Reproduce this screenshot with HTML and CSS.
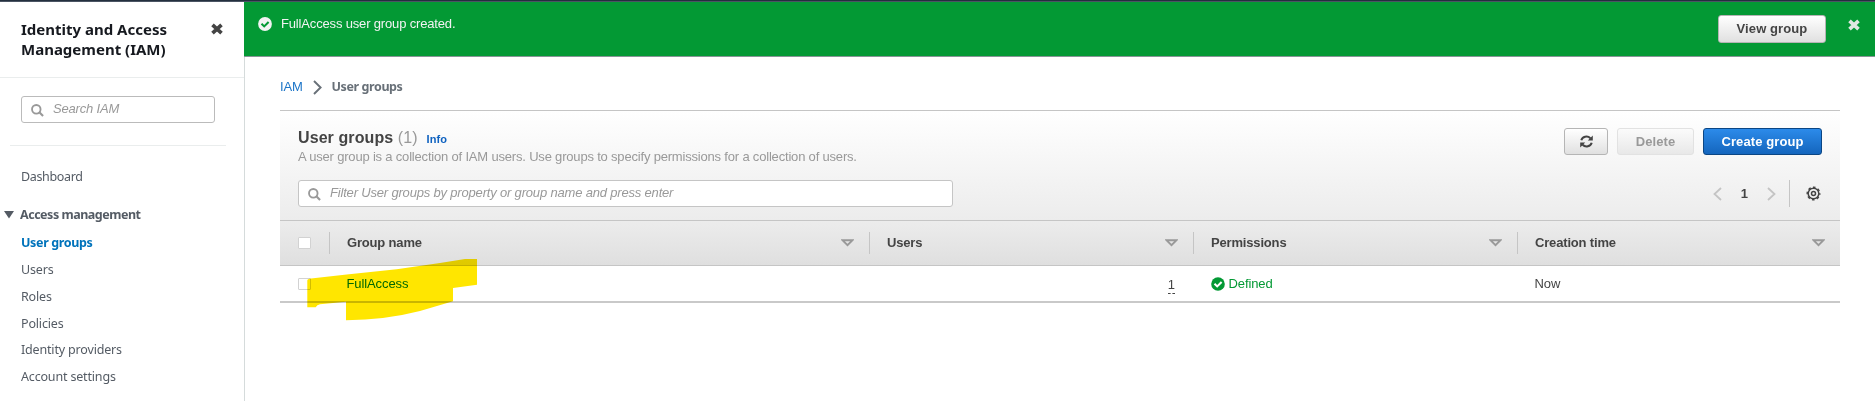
FILE: index.html
```html
<!DOCTYPE html>
<html lang="en">
<head>
<meta charset="utf-8">
<title>IAM - User groups</title>
<link rel="stylesheet" href="styles.css">
</head>
<body>
<svg class="defs" width="0" height="0">
  <symbol id="close" viewBox="0 0 12 12"><path d="M1.500 1.800 10.500 10.200M10.500 1.800 1.500 10.200" fill="none" stroke="currentColor" stroke-width="3.700"/></symbol>
  <symbol id="search" viewBox="0 0 14 14"><circle cx="5.7" cy="5.7" r="4.600" fill="none" stroke="currentColor" stroke-width="2"/><path d="M9 9l4 4" stroke="currentColor" stroke-width="2.300"/></symbol>
  <symbol id="sort" viewBox="0 0 13 8"><path d="M1.700 1.300h9.600L6.500 6.200z" fill="none" stroke="currentColor" stroke-width="1.900"/></symbol>
</svg>
<div class="topbar"></div>
<div class="layout">
  <nav class="sidebar">
    <header class="side-head">
      <h1 class="side-title">Identity and Access<br>Management (IAM)</h1>
      <svg class="side-close" width="12" height="12"><use href="#close"/></svg>
    </header>
    <div class="side-search"><svg width="13" height="13"><use href="#search"/></svg><span class="ph">Search IAM</span></div>
    <hr class="side-rule">
    <a class="nav-item dash">Dashboard</a>
    <div class="nav-group"><svg width="10" height="8"><path d="M0 0h10L5 7.500z" fill="#545b64"/></svg><span>Access management</span></div>
    <ul class="nav-list">
      <li class="nav-item active">User groups</li>
      <li class="nav-item">Users</li>
      <li class="nav-item">Roles</li>
      <li class="nav-item">Policies</li>
      <li class="nav-item">Identity providers</li>
      <li class="nav-item">Account settings</li>
    </ul>
  </nav>
  <main class="main">
    <div class="flash">
      <svg class="flash-icon" width="14" height="14" viewBox="0 0 14 14"><circle cx="7" cy="7" r="6.900" fill="#f2f3f3"/><path d="M3.500 6.800 6.200 9.400 10.600 5" fill="none" stroke="#039934" stroke-width="2.100"/></svg>
      <span class="flash-text">FullAccess user group created.</span>
      <button class="btn view">View group</button>
      <svg class="flash-close" width="12" height="12"><use href="#close"/></svg>
    </div>
    <div class="crumbs">
      <a class="crumb-link">IAM</a>
      <svg width="9" height="15" viewBox="0 0 9 15"><path d="M1 1l6.600 6.500L1 14" fill="none" stroke="#687078" stroke-width="1.900"/></svg>
      <span class="crumb-here">User groups</span>
    </div>
    <section class="panel">
      <div class="panel-head">
        <div class="head-row">
          <div class="titles">
            <h2 class="title">User groups <span class="count">(1)</span><a class="info">Info</a></h2>
            <p class="desc">A user group is a collection of IAM users. Use groups to specify permissions for a collection of users.</p>
          </div>
          <div class="actions">
            <button class="btn refresh"><svg width="13" height="13" viewBox="0 0 13 13"><g fill="none" stroke="#444" stroke-width="2"><path d="M1.300 5.300C2.300 1.600 7.400.200 10.400 3.300"/><path d="M11.700 7.700c-1 3.700-6.100 5.100-9.100 2"/></g><path d="M12.800.600v5H7.800zM.2 12.400v-5h5z" fill="#444"/></svg></button>
            <button class="btn delete">Delete</button>
            <button class="btn create">Create group</button>
          </div>
        </div>
        <div class="filter-row">
          <div class="filter"><svg width="13" height="13"><use href="#search"/></svg><span class="ph">Filter User groups by property or group name and press enter</span></div>
          <div class="pager">
            <svg width="9" height="14" viewBox="0 0 9 14"><path d="M8 1 1.500 7 8 13" fill="none" stroke="#c4c4c4" stroke-width="1.800"/></svg>
            <b class="page">1</b>
            <svg width="9" height="14" viewBox="0 0 9 14"><path d="M1 1l6.500 6L1 13" fill="none" stroke="#c4c4c4" stroke-width="1.800"/></svg>
            <span class="gear"><svg width="15" height="15" viewBox="0 0 15 15"><circle cx="7.500" cy="7.500" r="5.300" fill="none" stroke="#444" stroke-width="1.500"/><circle cx="7.500" cy="7.500" r="6.300" fill="none" stroke="#444" stroke-width="1.400" stroke-dasharray="2.600 2.348" stroke-dashoffset="1.300"/><circle cx="7.500" cy="7.500" r="2" fill="none" stroke="#444" stroke-width="1.500"/></svg></span>
          </div>
        </div>
      </div>
      <div class="grid thead">
        <div class="cell"><i class="check"></i></div>
        <div class="cell th"><span>Group name</span><svg width="13" height="8"><use href="#sort"/></svg></div>
        <div class="cell th"><span>Users</span><svg width="13" height="8"><use href="#sort"/></svg></div>
        <div class="cell th"><span>Permissions</span><svg width="13" height="8"><use href="#sort"/></svg></div>
        <div class="cell th"><span>Creation time</span><svg width="13" height="8"><use href="#sort"/></svg></div>
      </div>
      <div class="grid trow">
        <div class="cell"><i class="check"></i></div>
        <div class="cell td"><a class="group-link">FullAccess</a></div>
        <div class="cell td num"><span class="user-count">1</span></div>
        <div class="cell td defined"><svg width="14" height="14" viewBox="0 0 14 14"><circle cx="7" cy="7" r="6.800" fill="#039934"/><path d="M3.500 6.800 6.200 9.400 10.600 5" fill="none" stroke="#fff" stroke-width="2.100"/></svg><span>Defined</span></div>
        <div class="cell td">Now</div>
      </div>
      <svg class="marker" width="172" height="64" viewBox="306 258 172 64"><path d="M307.300 280.500Q307.300 278.800 311 278.500L346.700 274.500 396.700 269.300 440 263 465 259H477V284.700L453 288V301.300L420 311Q385 320 346 320.300V301.800L320 304.200Q317 304.800 315.700 307.300H307.300z" fill="#ffe600"/></svg>
    </section>
  </main>
</div>
</body>
</html>
```
FILE: styles.css
```css
* { box-sizing: border-box; }
body { margin: 0; height: 401px; overflow: hidden; background: #fff; color: #444; font: 13px/20px "Liberation Sans", Arial, sans-serif; }
svg { display: block; flex: none; }
.defs { position: absolute; }
h1, h2, p, ul { margin: 0; padding: 0; }
.topbar { height: 2px; background: #232f3e; border-bottom: 1px solid #4a5463; }
.layout { display: flex; height: 399px; }

.sidebar { width: 245px; flex: none; border-right: 1px solid #d5dbdb; font-family: "Noto Sans", sans-serif; color: #545b64; }
.side-head { display: flex; justify-content: space-between; height: 76px; padding: 17px 21px 0 21px; border-bottom: 1px solid #eaeded; }
.side-title { font-size: 15px; line-height: 20px; font-weight: 700; color: #16191f; white-space: nowrap; }
.side-close { margin-top: 4px; color: #444; }
.side-search { display: flex; align-items: center; width: 194px; height: 27px; margin: 18px 0 0 21px; padding-left: 9px; border: 1px solid #bbb; border-radius: 3px; color: #999; }
.ph { margin-left: 9px; font: italic 13px/20px "Liberation Sans", Arial, sans-serif; letter-spacing: -0.180px; color: #999; white-space: nowrap; }
.side-search svg, .filter svg { margin-top: 1px; }
.side-search .ph { margin-top: -1px; }
.side-rule { width: 216px; height: 1px; margin: 22px 0 0 10px; border: 0; background: #eaeded; }
.nav-item { display: block; height: 26.900px; padding-left: 21px; font-size: 12.500px; line-height: 27px; letter-spacing: -0.170px; list-style: none; white-space: nowrap; }
.dash { margin-top: 17px; letter-spacing: -0.350px; }
.nav-group { display: flex; align-items: center; gap: 6px; height: 20px; margin: 15px 0 4px; padding-left: 4px; font-size: 12.500px; font-weight: 700; letter-spacing: -0.480px; white-space: nowrap; }
.active { font-weight: 700; letter-spacing: -0.350px; color: #0073bb; }

.main { flex: 1; min-width: 0; }
.flash { display: flex; align-items: flex-start; height: 55px; margin-left: -1px; padding: 13px 15px 0 14px; background: #039934; border-bottom: 1px solid #879596; color: #f2f3f3; }
.flash-icon { margin-top: 2px; }
.flash-text { margin: -1px auto 0 9px; letter-spacing: -0.160px; }
.flash-close { margin: 4px 0 0 22px; color: #dfe8e1; }
.btn { display: flex; align-items: center; justify-content: center; height: 27px; padding: 0; border: 1px solid #b5b5b5; border-radius: 3px; background: linear-gradient(#fff, #e0e0e0); font: bold 13px/20px "Liberation Sans", Arial, sans-serif; letter-spacing: 0.100px; color: #444; white-space: nowrap; }
.view { width: 108px; height: 28px; }

.crumbs { display: flex; align-items: center; height: 29px; margin: 15px 0 0 35px; }
.crumb-link { letter-spacing: -0.200px; color: #1c75c8; }
.crumbs svg { margin: 1px 10px 0 10px; }
.crumb-here { font: 700 12.500px/20px "Noto Sans", sans-serif; letter-spacing: -0.400px; color: #687078; }

.panel { position: relative; width: 1560px; margin: 9px 0 0 35px; border-top: 1px solid #c5c5c5; border-bottom: 2px solid #c9c9c9; }
.panel-head { height: 109px; padding: 17px 18px 0; background: linear-gradient(#fff, #ececec); }
.head-row { display: flex; justify-content: space-between; height: 52px; }
.title { font-size: 16px; line-height: 20px; font-weight: 700; letter-spacing: 0.090px; white-space: nowrap; }
.count { font-weight: 400; color: #999; }
.info { margin-left: 9px; font-size: 11px; color: #0f62c0; }
.desc { margin-top: -1px; line-height: 18px; letter-spacing: -0.187px; color: #999; white-space: nowrap; }
.actions { display: flex; gap: 9px; }
.refresh { width: 44px; }
.delete { width: 77px; border-color: #e2e2e2; background: linear-gradient(#fbfbfb, #e8e8e8); color: #999; }
.create { width: 119px; border-color: #0b4684; background: linear-gradient(#2c8bea, #1465bd); color: #fff; }
.filter-row { display: flex; justify-content: space-between; }
.filter { display: flex; align-items: center; width: 655px; height: 27px; padding-left: 9px; border: 1px solid #c5c5c5; border-radius: 3px; background: #fff; color: #999; }
.filter .ph { margin-top: -1px; }
.pager { display: flex; align-items: center; height: 27px; }
.page { margin: 0 19px; }
.gear { display: flex; align-items: center; height: 27px; margin-left: 13px; padding: 0 1px 0 16px; border-left: 1px solid #c5c5c5; }

.grid { display: grid; grid-template-columns: 49px 540px 324px 324px 323px; }
.cell { display: flex; align-items: center; }
.thead { height: 46px; border-top: 1px solid #c5c5c5; border-bottom: 1px solid #c5c5c5; background: linear-gradient(#ececec, #dfdfdf); }
.check { width: 13px; height: 12px; margin-left: 18px; border: 1px solid #d2d2d2; border-radius: 1px; background: #fff; }
.th { align-self: center; justify-content: space-between; height: 22px; padding: 0 15px 0 17px; border-left: 1px solid #c5c5c5; font-weight: 700; letter-spacing: -0.170px; }
.th svg { color: #999; }
.trow { height: 35px; }
.td { padding: 0 18px 0 17.500px; letter-spacing: -0.100px; }
.group-link { color: #0073bb; }
.num { justify-content: flex-end; }
.user-count { line-height: 17px; margin-top: 2px; border-bottom: 1px dashed #444; }
.defined { gap: 4px; color: #039934; }
.marker { position: absolute; left: 26px; top: 147px; mix-blend-mode: multiply; }
```
